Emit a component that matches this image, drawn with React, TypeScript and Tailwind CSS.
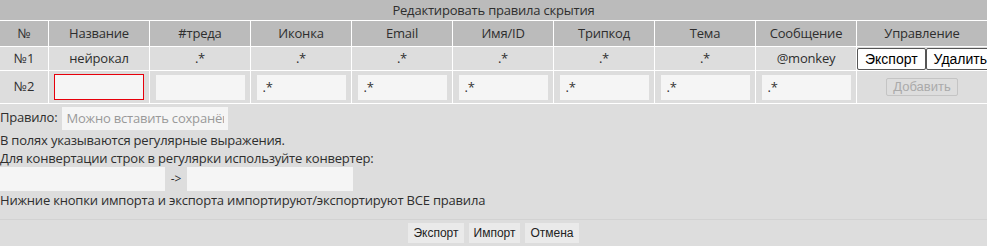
import React from "react";

const F = { fontFamily: '"Open Sans", Lato, sans-serif' };
const A = { fontFamily: '"Liberation Sans", Arial, sans-serif' };

const heads = ["№", "Название", "#треда", "Иконка", "Email", "Имя/ID", "Трипкод", "Тема", "Сообщение", "Управление"];
const row1 = ["№1", "нейрокал", ".*", ".*", ".*", ".*", ".*", ".*", "@monkey"];

export default function App() {
  return (
    <div className="w-[987px] h-[246px] bg-[#dddddd] text-[#2e2e2e] text-[13px] tracking-[-0.2px] overflow-hidden" style={F}>
      <div className="h-[20px] bg-[#bbbbbb] flex items-center justify-center leading-[20px]">Редактировать правила скрытия</div>
      <div className="grid grid-cols-[48px_repeat(8,100px)_130px] gap-px bg-white pt-px pb-px">
        {heads.map((h) => (
          <div key={h} className="h-[25px] bg-[#bbbbbb] flex items-center justify-center">{h}</div>
        ))}
        {row1.map((c, i) => (
          <div key={i} className="h-[23px] bg-[#dddddd] flex items-center justify-center">{c}</div>
        ))}
        <div className="h-[23px] bg-[#dddddd] flex items-center tracking-normal">
          <button className="h-[22px] px-[7px] bg-white border border-[#555] rounded-[2px] text-[14px] text-black" style={A}>Экспорт</button>
          <button className="h-[22px] px-[7px] bg-white border border-[#555] rounded-[2px] text-[14px] text-black" style={A}>Удалить</button>
        </div>
        <div className="h-[32px] bg-[#dddddd] flex items-center justify-center">№2</div>
        <div className="h-[32px] bg-[#dddddd] flex items-center justify-center">
          <input className="w-[90px] h-[26px] bg-[#f5f5f5] outline-none px-[6px] text-[13px] text-[#333] border border-solid border-red-600" style={F} defaultValue="" />
        </div>
        {Array.from({ length: 7 }).map((_, i) => (
          <div key={i} className="h-[32px] bg-[#dddddd] flex items-center justify-center">
            <input
              className="w-[89px] h-[25px] bg-[#f5f5f5] outline-none px-[6px] text-[13px] text-[#333]"
              style={F}
              defaultValue={i >= 1 ? ".*" : ""}
            />
          </div>
        ))}
        <div className="h-[32px] bg-[#dddddd] flex items-center justify-center tracking-normal">
          <button disabled className="w-[72px] h-[18px] border border-[#c4c4c4] rounded-[2px] bg-[#dddddd] text-[#aaaaaa] text-[13px] leading-[16px]" style={A}>Добавить</button>
        </div>
      </div>
      <div className="flex items-center h-[27px] pt-[1px]">
        <span className="mr-[5px]">Правило:</span>
        <input className="w-[166px] h-[23px] bg-[#f5f5f5] px-[4px] text-[13px] tracking-[-0.2px] outline-none placeholder:text-[#999]" style={F} placeholder="Можно вставить сохранённое правило" />
      </div>
      <div className="leading-[18px]">В полях указываются регулярные выражения.</div>
      <div className="leading-[18px]">Для конвертации строк в регулярки используйте конвертер:</div>
      <div className="flex items-center h-[24px]">
        <input className="w-[165px] h-[24px] bg-[#f5f5f5] outline-none" />
        <span className="w-[22px] text-center text-[12px]">-&gt;</span>
        <input className="w-[166px] h-[24px] bg-[#f5f5f5] outline-none" />
      </div>
      <div className="leading-[18px]">Нижние кнопки импорта и экспорта импортируют/экспортируют ВСЕ правила</div>
      <div className="mt-[10px] border-t border-[#d2d2d2] flex justify-center gap-[5px] pt-[3px] tracking-normal">
        <button className="h-[20px] px-[5px] bg-[#eaeaea] text-[12px] text-[#222]" style={A}>Экспорт</button>
        <button className="h-[20px] px-[5px] bg-[#eaeaea] text-[12px] text-[#222]" style={A}>Импорт</button>
        <button className="h-[20px] px-[5px] bg-[#eaeaea] text-[12px] text-[#222]" style={A}>Отмена</button>
      </div>
    </div>
  );
}
